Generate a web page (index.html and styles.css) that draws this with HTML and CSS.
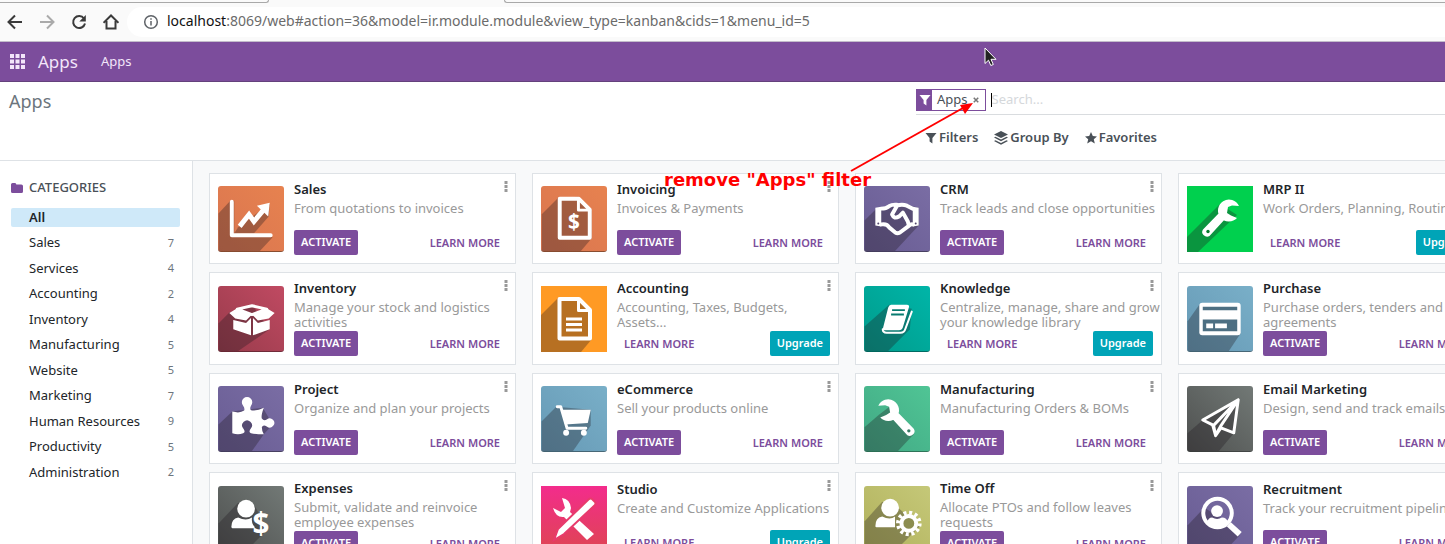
FILE: index.html
```html
<!DOCTYPE html>
<html lang="en">
<head>
<meta charset="utf-8">
<title>Apps</title>
<link rel="stylesheet" href="styles.css">
</head>
<body>
<svg class="defs" aria-hidden="true">
  <symbol id="funnel" viewBox="0 0 12 12"><path d="M.5 1h11L7.400 6v5.500L4.600 9.500V6z"/></symbol>
  <symbol id="dots" viewBox="0 0 4 12"><path d="M.5 0h3v3h-3zM.5 4h3v3h-3zM.5 8h3v3h-3z"/></symbol>
  <symbol id="doc" viewBox="0 0 66 66">
    <path class="shade" d="M17 12L0 29v37h40l11-13V24L38 11z"/>
    <path class="line slim" d="M18.500 13H38l11 11v28.500H18.500z"/><path class="line thin" d="M37.500 13v11.500H49"/>
  </symbol>
  <symbol id="wrench" viewBox="0 0 66 66">
    <path class="fill" d="M14 20A11 11 0 1 1 16 32L22 29.500l4-2.500-1-6-4-1.500zM27 32l6-6 17 17.500q2 3-.5 5.500-3 3-6 1z"/>
    <circle class="hole" cx="45" cy="45.500" r="1.700"/>
  </symbol>
</svg>

<header class="browser">
  <div class="tabstrip"><span class="tab-left"></span><span class="tab-right"></span></div>
  <div class="toolbar">
    <button class="tool" aria-label="Back"><svg viewBox="0 0 16 16"><path d="M15 8H2M8 1.500L1.500 8 8 14.500"/></svg></button>
    <button class="tool off" aria-label="Forward"><svg viewBox="0 0 16 16"><path d="M1 8h13M8 1.500L14.500 8 8 14.500"/></svg></button>
    <button class="tool" aria-label="Reload"><svg viewBox="0 0 16 16"><path d="M13 4.500A6 6 0 1 0 14 9.500"/><path class="solid" d="M14.800 1v6.500H8.300z"/></svg></button>
    <button class="tool" aria-label="Home"><svg viewBox="0 0 16 16"><path d="M.5 8.800L8 1.500l7.500 7.300M3.500 7v7.500h9V7"/></svg></button>
    <div class="address">
      <svg class="info" viewBox="0 0 16 16"><circle cx="8" cy="8" r="6.300"/><path d="M8 7v4.500M8 4.200v1.600"/></svg>
      <span class="url"><b>localhost</b>:8069/web#action=36&amp;model=ir.module.module&amp;view_type=kanban&amp;cids=1&amp;menu_id=5</span>
    </div>
  </div>
</header>

<nav class="navbar">
  <button class="launcher" aria-label="Applications"><svg viewBox="0 0 15 15"><path d="M0 0h4v4H0zM5.500 0h4v4h-4zM11 0h4v4h-4zM0 5.500h4v4H0zM5.500 5.500h4v4h-4zM11 5.500h4v4h-4zM0 11h4v4H0zM5.500 11h4v4h-4zM11 11h4v4h-4z"/></svg></button>
  <a class="brand" href="#">Apps</a>
  <a class="menu" href="#">Apps</a>
</nav>

<section class="control">
  <h1>Apps</h1>
  <div class="search">
    <div class="searchbar">
      <div class="facet"><span class="facet-icon"><svg><use href="#funnel"/></svg></span><span class="facet-label">Apps</span><button class="facet-x" aria-label="Remove"><svg viewBox="0 0 8 8"><path d="M1 1l6 6M7 1L1 7"/></svg></button></div>
      <span class="caret"></span>
      <input type="text" placeholder="Search..." aria-label="Search">
    </div>
    <div class="options">
      <button><svg viewBox="0 0 12 12"><use href="#funnel"/></svg>Filters</button>
      <button><svg class="wide" viewBox="0 0 14 14"><path d="M7 0l7 3.500L7 7 0 3.500zM1.500 5.800L7 8.500l5.500-2.700L14 6.600 7 10.200 0 6.600zM1.500 9.200L7 12l5.500-2.800 1.500.8-7 3.700L0 10z"/></svg>Group By</button>
      <button><svg viewBox="0 0 12 12"><path d="M6 0l1.800 4 4.200.4-3.200 2.800 1 4.300L6 9.300l-3.800 2.200 1-4.300L0 4.400 4.200 4z"/></svg>Favorites</button>
    </div>
  </div>
</section>

<main class="content">
  <aside class="sidebar">
    <h2><svg viewBox="0 0 12 10"><path d="M0 1.500Q0 0 1.500 0h2.500q1.300 0 1.300 1.500h5Q12 1.500 12 3v5.500Q12 10 10.500 10h-9Q0 10 0 8.500z"/></svg>CATEGORIES</h2>
    <ul>
      <li class="active"><span>All</span></li>
      <li><span>Sales</span><small>7</small></li>
      <li><span>Services</span><small>4</small></li>
      <li><span>Accounting</span><small>2</small></li>
      <li><span>Inventory</span><small>4</small></li>
      <li><span>Manufacturing</span><small>5</small></li>
      <li><span>Website</span><small>5</small></li>
      <li><span>Marketing</span><small>7</small></li>
      <li><span>Human Resources</span><small>9</small></li>
      <li><span>Productivity</span><small>5</small></li>
      <li><span>Administration</span><small>2</small></li>
    </ul>
  </aside>

  <div class="kanban">
    <article class="card">
      <svg class="tile orange" viewBox="0 0 66 66"><path class="shade" d="M12 15L0 28v38h42l13-14-39-4V15z"/><path class="shade" d="M20 42L52 18l-1 13-15 17H16z"/><path class="line slim" d="M13.500 16v34H53"/><path class="line thick" d="M21.500 41L31 29l5 7 10-12"/><path class="fill" d="M39 20l13-3-1.500 14z"/></svg>
      <div class="body"><h3>Sales</h3><p>From quotations to invoices</p><div class="actions"><button class="btn">ACTIVATE</button><a class="more" href="#">LEARN MORE</a></div></div>
      <button class="kebab" aria-label="Options"><svg><use href="#dots"/></svg></button>
    </article>
    <article class="card">
      <svg class="tile orange" viewBox="0 0 66 66"><use href="#doc"/><text x="33" y="44" class="dollar">$</text></svg>
      <div class="body"><h3>Invoicing</h3><p>Invoices &amp; Payments</p><div class="actions"><button class="btn">ACTIVATE</button><a class="more" href="#">LEARN MORE</a></div></div>
      <button class="kebab" aria-label="Options"><svg><use href="#dots"/></svg></button>
    </article>
    <article class="card">
      <svg class="tile violet" viewBox="0 0 66 66"><path class="shade" d="M11 24L0 35v31h31l24-26V22l-16-4-13 1z"/><path class="fill" d="M11 22l6-1v20l-6-1zM49 21l6 1v18l-6 1z"/><path class="line slim" d="M17 23q5 0 8-2.500 3-2 8-1.500M17 39q6-1 8 3l6 5q3 2 6-.5l8-6q2-2 4-1.500M33 20q5-2 10 0l6 3M33 20l-5 9q2 5 7 2l4-4 5 9 1 4"/><circle class="hole" cx="14" cy="38" r="1"/><circle class="hole" cx="52" cy="38" r="1"/></svg>
      <div class="body"><h3>CRM</h3><p>Track leads and close opportunities</p><div class="actions"><button class="btn">ACTIVATE</button><a class="more" href="#">LEARN MORE</a></div></div>
      <button class="kebab" aria-label="Options"><svg><use href="#dots"/></svg></button>
    </article>
    <article class="card">
      <svg class="tile green flat" viewBox="0 0 66 66"><path class="shade" d="M33 18L0 51v15h11l39-37z"/><g transform="matrix(-1 0 0 1 66 0)"><use href="#wrench"/></g></svg>
      <div class="body"><h3>MRP II</h3><p>Work Orders, Planning, Routing</p><div class="actions"><a class="more" href="#">LEARN MORE</a><button class="btn upgrade">Upgrade</button></div></div>
    </article>

    <article class="card">
      <svg class="tile red" viewBox="0 0 66 66"><path class="shade" d="M11 27L0 38v28h20l32-22-18-25z"/><path class="line thin" d="M19 23.500L34 20l15 3.500L34 29z"/><path class="fill" d="M19 22.500l-8 5 6 5.500 11 2 6-6zM49 22.500l8 5-6 5.500-11 2-6-6zM15 34.500l13 3 5-5V50l-18-6zM52 34.500l-12 3-5-5V50l17-6z"/></svg>
      <div class="body"><h3>Inventory</h3><p>Manage your stock and logistics<br>activities</p><div class="actions"><button class="btn">ACTIVATE</button><a class="more" href="#">LEARN MORE</a></div></div>
      <button class="kebab" aria-label="Options"><svg><use href="#dots"/></svg></button>
    </article>
    <article class="card">
      <svg class="tile amber flat" viewBox="0 0 66 66"><use href="#doc"/><path class="line thin butt" d="M25 33h16M25 38.500h16M25 44h16"/></svg>
      <div class="body"><h3>Accounting</h3><p>Accounting, Taxes, Budgets,<br>Assets...</p><div class="actions"><a class="more" href="#">LEARN MORE</a><button class="btn upgrade">Upgrade</button></div></div>
      <button class="kebab" aria-label="Options"><svg><use href="#dots"/></svg></button>
    </article>
    <article class="card">
      <svg class="tile teal" viewBox="0 0 66 66"><path class="shade" d="M25 19L0 41v25h24l22-22 2-21z"/><path class="fill" d="M27 19h16q3 0 2 3l-6 20q-1 3-4 3H20q-2 0-1-3l5-20q1-3 3-3z"/><path class="line hair" d="M18.500 44q0 3.500 4 3.500h14q4 0 5-4L48 26"/><path class="groove" d="M28 24.500h13M27 29h13"/></svg>
      <div class="body"><h3>Knowledge</h3><p>Centralize, manage, share and grow<br>your knowledge library</p><div class="actions"><a class="more" href="#">LEARN MORE</a><button class="btn upgrade">Upgrade</button></div></div>
      <button class="kebab" aria-label="Options"><svg><use href="#dots"/></svg></button>
    </article>
    <article class="card">
      <svg class="tile blue" viewBox="0 0 66 66"><path class="shade" d="M12 19L0 36v30h42l12-18z"/><rect class="fill" x="12" y="17" width="42" height="33" rx="3"/><path class="inset" d="M15.500 21h35v3.500h-35zM15.500 34h35v12h-35z"/><path class="fill" d="M19 38h7v5h-7zM28 38h12v5H28z"/></svg>
      <div class="body"><h3>Purchase</h3><p>Purchase orders, tenders and<br>agreements</p><div class="actions"><button class="btn">ACTIVATE</button><a class="more" href="#">LEARN MORE</a></div></div>
    </article>

    <article class="card">
      <svg class="tile violet" viewBox="0 0 66 66"><path class="shade" d="M14 26L0 39v27h34l12-17 9-10-10-17z"/><path class="fill" d="M14 26q8 2 12-1 1-2-1-5a5.300 5.300 0 1 1 8 0q-2 4 1 5 6 0 12-3-3 8-2 11 2 3 5 1a4.600 4.600 0 1 1 0 7q-4-2-5 1 0 4 2 7-8 0-13-1-3-1 0-5a5 5 0 1 0-8 0q3 4 0 5-5 2-11 0z"/></svg>
      <div class="body"><h3>Project</h3><p>Organize and plan your projects</p><div class="actions"><button class="btn">ACTIVATE</button><a class="more" href="#">LEARN MORE</a></div></div>
      <button class="kebab" aria-label="Options"><svg><use href="#dots"/></svg></button>
    </article>
    <article class="card">
      <svg class="tile blue" viewBox="0 0 66 66"><path class="shade" d="M15 21L0 36v30h32l18-26V24z"/><path class="line thin" d="M16 21h3.500L26 43h19"/><path class="fill" d="M20 24h30l-3 13.500-23 1.500z"/><circle class="fill" cx="25" cy="47.500" r="3"/><circle class="fill" cx="43" cy="47.500" r="3"/></svg>
      <div class="body"><h3>eCommerce</h3><p>Sell your products online</p><div class="actions"><button class="btn">ACTIVATE</button><a class="more" href="#">LEARN MORE</a></div></div>
      <button class="kebab" aria-label="Options"><svg><use href="#dots"/></svg></button>
    </article>
    <article class="card">
      <svg class="tile mint" viewBox="0 0 66 66"><path class="shade" d="M15 29L0 42v24h34l16-17-22-30z"/><use href="#wrench"/></svg>
      <div class="body"><h3>Manufacturing</h3><p>Manufacturing Orders &amp; BOMs</p><div class="actions"><button class="btn">ACTIVATE</button><a class="more" href="#">LEARN MORE</a></div></div>
      <button class="kebab" aria-label="Options"><svg><use href="#dots"/></svg></button>
    </article>
    <article class="card">
      <svg class="tile gray" viewBox="0 0 66 66"><path class="shade" d="M15 35L0 48v18h32l15-18 4-33z"/><path class="line thin" d="M15.500 34.500L51.500 14l-4.500 33.500-13-5-5.500 8-3-11zM51.500 14l-25 26 2 10 5-9z"/></svg>
      <div class="body"><h3>Email Marketing</h3><p>Design, send and track emails</p><div class="actions"><button class="btn">ACTIVATE</button><a class="more" href="#">LEARN MORE</a></div></div>
    </article>

    <article class="card">
      <svg class="tile gray" viewBox="0 0 66 66"><path class="shade" d="M20 17L0 38v28h28l22-22-14-25z"/><circle class="fill" cx="28" cy="23" r="9"/><path class="fill" d="M13 42q0-9 7-10 8 4 14 0-1 6 3 10l-1 1H14z"/><text x="43" y="49" class="dollar big">$</text></svg>
      <div class="body"><h3>Expenses</h3><p>Submit, validate and reinvoice<br>employee expenses</p><div class="actions"><button class="btn">ACTIVATE</button><a class="more" href="#">LEARN MORE</a></div></div>
      <button class="kebab" aria-label="Options"><svg><use href="#dots"/></svg></button>
    </article>
    <article class="card">
      <svg class="tile pink flat" viewBox="0 0 66 66"><path class="fill" d="M21 12q8 1 9 10l-1 4 24 22-7 6-23-23q-8 1-11-9l8 4 4-4z"/><path class="pencil" d="M48 13q2-1 3 0l3 3q1 1 0 3L23 48l-10 6 4-11z"/></svg>
      <div class="body"><h3>Studio</h3><p>Create and Customize Applications</p><div class="actions"><a class="more" href="#">LEARN MORE</a><button class="btn upgrade">Upgrade</button></div></div>
      <button class="kebab" aria-label="Options"><svg><use href="#dots"/></svg></button>
    </article>
    <article class="card">
      <svg class="tile olive" viewBox="0 0 66 66"><path class="shade" d="M18 16L0 36v30h31l25-25-22-19z"/><circle class="fill" cx="26" cy="22" r="9"/><path class="fill" d="M11 41q0-9 7-10 8 4 13 0v11H12z"/><circle class="teeth" cx="45" cy="38" r="11"/><circle class="gear" cx="45" cy="38" r="7.500"/></svg>
      <div class="body"><h3>Time Off</h3><p>Allocate PTOs and follow leaves<br>requests</p><div class="actions"><button class="btn">ACTIVATE</button><a class="more" href="#">LEARN MORE</a></div></div>
      <button class="kebab" aria-label="Options"><svg><use href="#dots"/></svg></button>
    </article>
    <article class="card">
      <svg class="tile violet" viewBox="0 0 66 66"><path class="shade" d="M17 22L0 40v26h38l15-16-9-11z"/><circle class="line slim" cx="30.500" cy="27.500" r="14.500"/><circle class="fill" cx="30" cy="25.500" r="6"/><path class="fill" d="M20 37q1-5 5-5 5 3 10 0 5 0 6 5-10 8-21 0z"/><path class="line butt heavy" d="M42 39l11 10"/></svg>
      <div class="body"><h3>Recruitment</h3><p>Track your recruitment pipeline</p><div class="actions"><button class="btn">ACTIVATE</button><a class="more" href="#">LEARN MORE</a></div></div>
    </article>
  </div>
</main>

<svg class="arrow" viewBox="0 0 130 76" aria-hidden="true"><path d="M2 72L114 9" /><path class="head" d="M124 4l-8 11-5-9z"/></svg>
<div class="note">remove "Apps" filter</div>
<svg class="pointer" viewBox="0 0 14 20" aria-hidden="true"><path d="M1 1v15.500l3.500-3.300 2.300 5.300 2.500-1-2.300-5.200h5z"/></svg>
</body>
</html>
```

FILE: styles.css
```css
* { box-sizing: border-box; }
body {
  margin: 0;
  height: 100vh;
  display: flex;
  flex-direction: column;
  overflow: hidden;
  position: relative;
  background: #fff;
  color: #212529;
  font: 13px/1.5 "Noto Sans", "Open Sans", sans-serif;
}
h1, h2, h3, p, ul { margin: 0; padding: 0; font-weight: 400; }
button { font: inherit; border: 0; padding: 0; background: none; color: inherit; }
a { color: inherit; text-decoration: none; }
.defs { position: absolute; width: 0; height: 0; }

.browser { flex: none; background: #fafafa; border-bottom: 1px solid #c3bccb; }
.tabstrip { display: flex; justify-content: space-between; height: 3px; }
.tab-left { width: 269px; border-bottom: 1px solid #a9a9a9; border-right: 1px solid #a9a9a9; border-bottom-right-radius: 4px; }
.tab-right { width: calc(100% - 504px); border-bottom: 1px solid #a9a9a9; border-left: 1px solid #a9a9a9; border-bottom-left-radius: 4px; }
.toolbar { display: flex; align-items: center; gap: 16px; height: 38px; padding-left: 7px; }
.tool { width: 16px; height: 16px; }
.tool svg { display: block; width: 16px; height: 16px; fill: none; stroke: #3a3a3a; stroke-width: 2; }
.tool .solid { fill: #3a3a3a; stroke: none; }
.tool.off svg { stroke: #aaa; }
.address { flex: 1; display: flex; align-items: center; gap: 8px; height: 30px; padding-left: 16px; margin-left: -8px; background: #fff; border-radius: 15px 0 0 15px; }
.info { width: 16px; height: 16px; fill: none; stroke: #5f6368; stroke-width: 1.5; }
.url { font-size: 14px; line-height: 20px; padding-bottom: 2px; color: #6b6b6b; white-space: nowrap; }
.url b { font-weight: 400; color: #111; }

.navbar { flex: none; display: flex; align-items: center; height: 40px; padding-left: 10px; background: #7c4d9c; border-bottom: 1px solid #64417c; color: #f3e6fa; }
.launcher { width: 15px; height: 15px; margin-right: 13px; }
.launcher svg { display: block; fill: #f3e6fa; }
.brand { font-size: 17px; margin-right: 23px; }

.control { flex: none; display: grid; grid-template-columns: minmax(0, 907fr) 529fr; height: 79px; padding: 7px 0 0 9px; border-bottom: 1px solid #dee2e6; }
h1 { font-size: 18px; line-height: 24px; color: #6c757d; }
.searchbar { display: flex; align-items: center; height: 26px; padding-bottom: 3px; border-bottom: 1px solid #d9dcdf; }
.facet { display: flex; align-items: center; height: 22px; border: 1px solid #7c4d9c; color: #495057; }
.facet-icon { display: flex; align-items: center; justify-content: center; width: 15px; height: 20px; background: #7c4d9c; }
.facet-icon svg { width: 12px; height: 12px; fill: #fff; }
.facet-label { padding: 0 5px; }
.facet-x { width: 6px; height: 6px; margin-right: 6px; }
.facet-x svg { display: block; stroke: #777; stroke-width: 2; }
.caret { width: 1px; height: 14px; margin-left: 5px; background: #000; }
.searchbar input { flex: 1; min-width: 0; padding: 0; border: 0; outline: 0; font: inherit; background: none; }
.searchbar input::placeholder { color: #d5d8db; opacity: 1; }
.options { display: flex; gap: 16px; padding: 13px 0 0 9px; }
.options button { display: flex; align-items: center; gap: 2px; font-weight: 600; color: #495057; }
.options svg { width: 12px; height: 12px; fill: #495057; }
.options .wide { width: 14px; height: 14px; }

.content { flex: 1; min-height: 0; display: flex; background: #f8f9fa; }
.sidebar { flex: none; width: 193px; padding: 17px 12px 0 11px; background: #fff; border-right: 1px solid #dee2e6; }
h2 { display: flex; align-items: center; gap: 6px; margin-bottom: 10px; font-size: 13px; font-weight: 500; color: #495057; }
h2 svg { width: 12px; height: 10px; fill: #7c4d9c; }
.sidebar ul { display: grid; gap: 6px; list-style: none; }
.sidebar li { display: flex; justify-content: space-between; align-items: center; padding: 0 6px 0 18px; border-radius: 2px; }
.sidebar small { font-size: 11px; line-height: 16px; color: #6c757d; }
.sidebar .active { background: #cfe9f9; font-weight: 600; }

.kanban { flex: 1; min-width: 0; overflow: hidden; display: grid; grid-template-columns: repeat(4, minmax(307px, 1fr)); align-content: start; gap: 8px 16px; padding: 12px 0 0 16px; }
.card { position: relative; display: flex; align-items: center; gap: 10px; padding: 5px 8px 8px; background: #fff; border: 1px solid #dee2e6; }
.tile { flex: none; width: 66px; height: 66px; margin-top: 3px; border-radius: 3px; border-bottom: 1px solid rgba(0, 0, 0, .4); }
.tile.flat { border-radius: 0; border-bottom: 0; }
.orange { background: linear-gradient(45deg, #d97550, #e7824f); }
.violet { background: linear-gradient(45deg, #685c93, #7a6da4); }
.green { background: #00d04e; --hole: #067c2e; }
.red { background: linear-gradient(45deg, #983b4b, #c04a62); }
.amber { background: #ff9a24; }
.teal { background: linear-gradient(45deg, #009b8b, #00b5a8); --hole: #087b70; }
.blue { background: linear-gradient(45deg, #6699b5, #79afc8); }
.mint { background: linear-gradient(45deg, #41a884, #50c595); --hole: #367a64; }
.gray { background: linear-gradient(45deg, #4e504f, #727976); }
.pink { background: linear-gradient(#f32c8c, #de4552); }
.olive { background: linear-gradient(45deg, #b1b15c, #c5c878); }
.shade { fill: rgba(30, 25, 30, .32); }
.fill { fill: #fff; }
.hole { fill: var(--hole, #51466d); }
.inset { fill: #4d6f82; }
.groove { stroke: #087b70; stroke-width: 2; }
.line { fill: none; stroke: #fff; stroke-linejoin: round; stroke-linecap: round; }
.slim { stroke-width: 4; }
.thin { stroke-width: 3; }
.hair { stroke-width: 2; }
.thick { stroke-width: 5; stroke-linejoin: miter; stroke-linecap: butt; }
.butt { stroke-linecap: butt; }
.heavy { stroke-width: 6; }
.pencil { fill: #fff; stroke: #e83b6c; stroke-width: 2; }
.gear { fill: #8c8d50; stroke: #fff; stroke-width: 4; }
.teeth { fill: none; stroke: #fff; stroke-width: 4; stroke-dasharray: 3 2.760; }
.dollar { fill: #fff; font-size: 21px; font-weight: 700; text-anchor: middle; }
.dollar.big { font-size: 30px; }
.body { flex: 1; min-width: 0; }
h3 { font-size: 13px; line-height: 20px; font-weight: 600; }
.body p { min-height: 28px; margin: 2px 0 1px; line-height: 15px; color: #999; white-space: nowrap; }
.actions { display: flex; justify-content: space-between; align-items: center; }
.btn { height: 25px; padding: 0 7px; border-radius: 2px; background: #7c4d9c; color: #fff; font-size: 11px; font-weight: 600; }
.upgrade { background: #00a4b7; }
.more { padding: 0 7px; color: #7c4d9c; font-size: 11px; line-height: 18px; font-weight: 600; }
.kebab { position: absolute; top: 7px; right: 7px; width: 4px; height: 12px; }
.kebab svg { display: block; width: 4px; height: 12px; fill: #999; }

.arrow { position: absolute; left: 849px; top: 99px; width: 130px; height: 76px; fill: none; stroke: #f00; stroke-width: 2; }
.arrow .head { fill: #f00; stroke: none; }
.note { position: absolute; left: 664px; top: 168px; font: bold 18px/24px "DejaVu Sans", sans-serif; color: #f00; white-space: nowrap; }
.pointer { position: absolute; left: 984px; top: 47px; width: 14px; height: 20px; fill: #222; stroke: #fff; stroke-width: 1; }
```
